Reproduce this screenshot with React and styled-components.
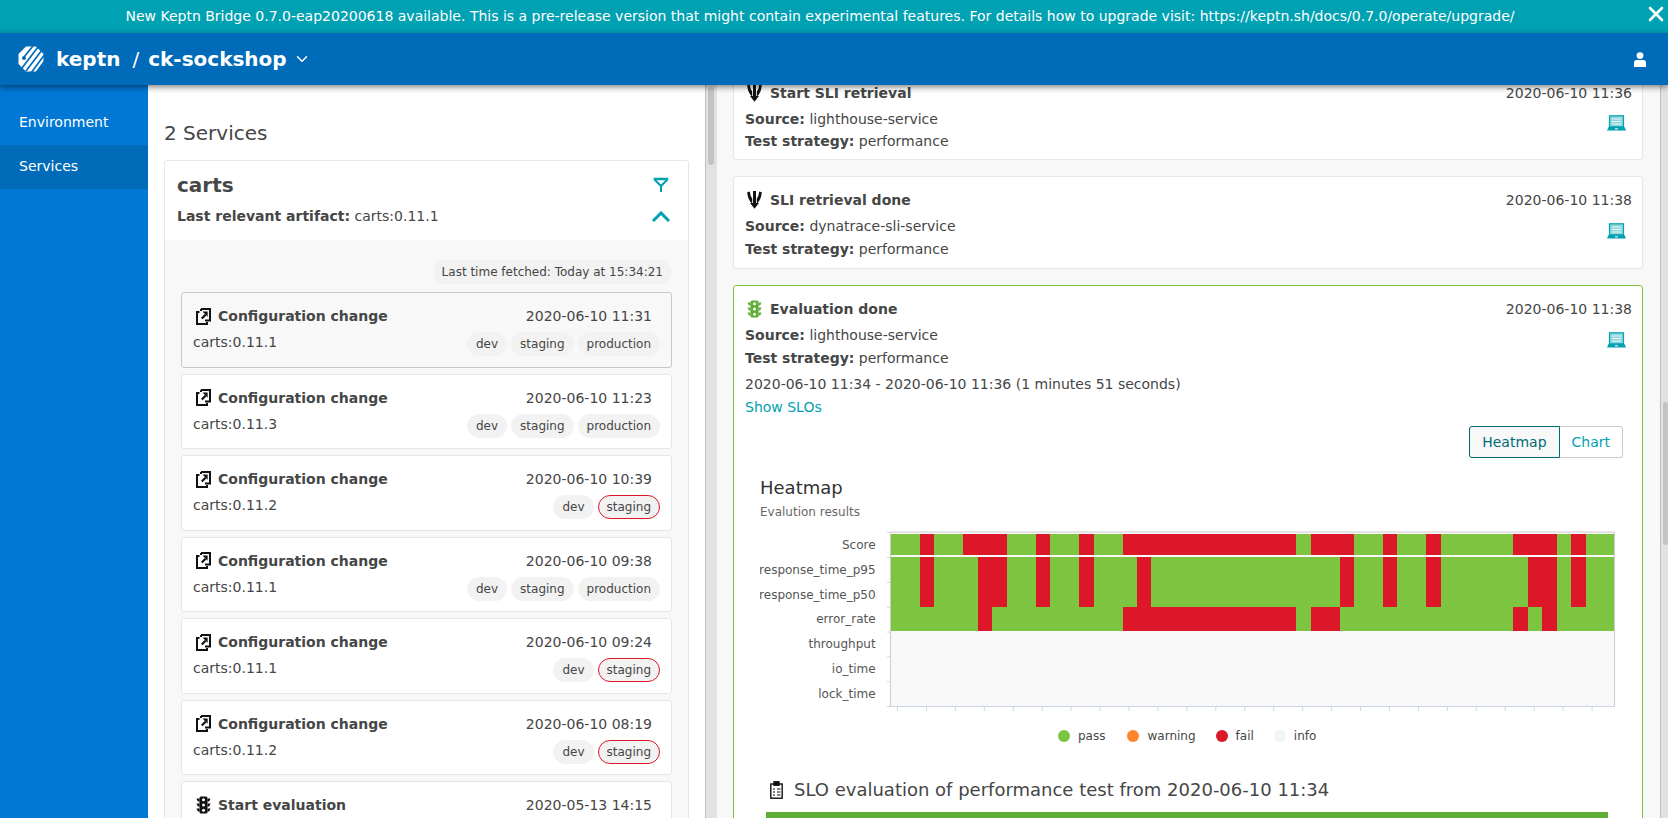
import React from 'react'
import styled, { createGlobalStyle } from 'styled-components'
import { ChevronDown, X } from 'lucide-react'

const GlobalStyle = createGlobalStyle`
  html, body { margin: 0; padding: 0; height: 100%; overflow: hidden; }
  body {
    font-family: "DejaVu Sans", Verdana, sans-serif;
    font-size: 14px;
    color: #454646;
  }
`

const Page = styled.div`
  width: 1668px;
  height: 818px;
  display: flex;
  flex-direction: column;
  overflow: hidden;
`
const Banner = styled.div`
  height: 33px;
  flex: none;
  box-sizing: border-box;
  background: #00a1b2;
  color: #fff;
  display: flex;
  align-items: center;
  justify-content: center;
  padding: 0 28px 2px 0;
  position: relative;
`
const CloseBtn = styled.span`
  position: absolute;
  right: 0;
  top: 2px;
  color: #fff;
  display: flex;
`
const Header = styled.header`
  height: 52px;
  flex: none;
  box-sizing: border-box;
  background: #006bb8;
  color: #fff;
  display: flex;
  align-items: center;
  padding: 0 22px 0 18px;
  font-size: 20px;
  font-weight: 700;
  box-shadow: 0 2px 6px rgba(0, 0, 0, 0.5);
  position: relative;
  z-index: 5;
`
const Slash = styled.span`
  font-weight: 400;
  margin: 0 9px 0 12px;
`
const Brand = styled.span`
  margin-left: 12px;
`
const UserBtn = styled.span`
  margin-left: auto;
  display: flex;
`
const Body = styled.div`
  flex: 1;
  display: flex;
  min-height: 0;
`
const Sidebar = styled.nav`
  width: 148px;
  flex: none;
  background: #0078d4;
  padding-top: 16px;
`
const NavItem = styled.div`
  height: 44px;
  box-sizing: border-box;
  display: flex;
  align-items: center;
  padding: 0 0 2px 19px;
  color: #fff;
  background: ${p => (p.$active ? '#006bb8' : 'transparent')};
`
const LeftPane = styled.section`
  width: 557px;
  flex: none;
  background: #fff;
  overflow: hidden;
  padding: 36px 16px 0;
  box-sizing: border-box;
`
const Scrollbar = styled.div`
  width: ${p => p.$w}px;
  flex: none;
  background: #e2e2e0;
  position: relative;
  border-left: 1px solid #bdbdbb;
  box-sizing: border-box;
`
const Thumb = styled.div`
  position: absolute;
  left: 2px;
  width: ${p => p.$w}px;
  top: ${p => p.$top}px;
  height: ${p => p.$h}px;
  background: #c2c4c2;
  border-radius: 3px;
`
const PaneTitle = styled.h2`
  margin: 0 0 15px;
  font-size: 20px;
  line-height: 24px;
  font-weight: 400;
`
const ServiceCard = styled.div`
  width: 525px;
  height: 660px;
  overflow: hidden;
  box-sizing: border-box;
  border: 1px solid #e6e6e6;
  border-radius: 3px;
  background: #f8f8f8;
`
const ServiceHead = styled.div`
  background: #fff;
  height: 79px;
  box-sizing: border-box;
  padding: 10px 12px 0;
  display: grid;
  grid-template-columns: 1fr auto;
  grid-auto-rows: 28px;
  row-gap: 3px;
  align-items: center;
`
const ServiceName = styled.div`
  font-size: 20px;
  font-weight: 700;
`
const IconCell = styled.span`
  display: flex;
  justify-content: center;
  width: 18px;
  margin-right: 6px;
  color: #00a1b2;
`
const Bold = styled.b`
  font-weight: 700;
`
const RowList = styled.div`
  padding: 0 16px;
`
const Fetched = styled.div`
  display: flex;
  justify-content: flex-end;
  margin: 20px 0 8px;
`
const FetchedPill = styled.span`
  height: 24px;
  padding: 0 9px;
  border-radius: 12px;
  background: #f2f2f2;
  font-size: 12px;
  display: flex;
  align-items: center;
`
const EventRow = styled.div`
  height: 75.56px;
  box-sizing: border-box;
  margin-bottom: 6px;
  padding: 11px 11px 0;
  background: ${p => (p.$selected ? '#f8f8f8' : '#fff')};
  border: 1px solid ${p => (p.$selected ? '#c8c8c8' : '#e6e6e6')};
  border-radius: 3px;
`
const RowTop = styled.div`
  display: flex;
  align-items: center;
  height: 24px;
  padding-right: 8px;
`
const RowTitle = styled.span`
  font-weight: 700;
  margin-left: 7px;
`
const RowIcon = styled.span`
  display: flex;
  width: 15px;
  margin-left: 3px;
  color: ${p => p.$color || '#111'};
`
const Stamp = styled.span`
  margin-left: auto;
`
const RowBottom = styled.div`
  display: flex;
  align-items: center;
  margin-top: 4px;
  height: 24px;
`
const Version = styled.span`
  margin-top: -4px;
`
const Tags = styled.div`
  margin-left: auto;
  display: flex;
  gap: 4px;
`
const Tag = styled.span`
  height: 24px;
  box-sizing: border-box;
  padding: 0 8px;
  border-radius: 12px;
  background: #f2f2f2;
  border: 1px solid ${p => (p.$failed ? '#dc172a' : '#f2f2f2')};
  font-size: 12px;
  display: flex;
  align-items: center;
`
const RightPane = styled.section`
  flex: 1;
  min-width: 0;
  background: #f8f8f8;
  overflow: hidden;
  padding: 0 17px 0 16px;
  box-sizing: border-box;
`
const EventList = styled.div`
  margin-top: -16.5px;
  display: flex;
  flex-direction: column;
  gap: 16px;
`
const EventCard = styled.article`
  background: #fff;
  border: 1px solid ${p => (p.$success ? '#7dc540' : '#e6e6e6')};
  border-radius: 3px;
  padding: 11px 10px 0 11px;
  height: ${p => p.$h}px;
  flex: none;
  box-sizing: border-box;
  position: relative;
`
const CardTop = styled.div`
  display: flex;
  align-items: center;
  height: 24px;
`
const CardIcon = styled.span`
  display: flex;
  width: 15px;
  margin-left: 2px;
  margin-right: 8px;
  color: ${p => p.$color || '#111'};
`
const Line = styled.div`
  line-height: 22.5px;
  height: 22.5px;
  margin-top: ${p => p.$gap || 0}px;
`
const Details = styled.div`
  margin-top: 3px;
`
const Laptop = styled.span`
  position: absolute;
  right: 16px;
  top: ${p => p.$top}px;
  display: flex;
  color: #00a1b2;
`
const LinkText = styled.div`
  color: #00a1b2;
  line-height: 22px;
`
const TabRow = styled.div`
  display: flex;
  justify-content: flex-end;
  margin: 8.5px 9px 0 0;
`
const TabBtn = styled.span`
  height: 32px;
  box-sizing: border-box;
  padding: 0 12px;
  display: flex;
  align-items: center;
  background: ${p => (p.$active ? '#f8f8f8' : '#fff')};
  color: ${p => (p.$active ? '#006b75' : '#00a1b2')};
  border: 1px solid ${p => (p.$active ? '#006b75' : '#ccc')};
  border-left-width: ${p => (p.$active ? 1 : 0)}px;
  border-radius: ${p => (p.$active ? '3px 0 0 3px' : '0 3px 3px 0')};
`
const ChartBox = styled.div`
  margin: 18px 0 0 15px;
`
const ChartTitle = styled.div`
  font-size: 18px;
  line-height: 24px;
  color: #333;
`
const ChartSub = styled.div`
  font-size: 12px;
  line-height: 16px;
  margin-top: 4px;
  color: #666;
`
const ChartSvg = styled.svg`
  display: block;
  margin-top: 9px;
`
const Legend = styled.div`
  display: flex;
  padding-left: 298px;
  margin-top: 11px;
  font-size: 12px;
  height: 20px;
`
const LegendItem = styled.span`
  display: flex;
  align-items: center;
  gap: 8px;
  margin-right: ${p => p.$gap}px;
  &::before {
    content: '';
    width: 12px;
    height: 12px;
    border-radius: 50%;
    background: ${p => p.$color};
  }
`
const SloTitle = styled.h3`
  margin: 32px 0 0 25px;
  font-size: 18px;
  line-height: 24px;
  font-weight: 400;
  display: flex;
  align-items: center;
  gap: 11px;
`
const SloBar = styled.div`
  margin: 10px 24px 0 21px;
  height: 30px;
  background: #5ead35;
`

const GREEN = '#7dc540'
const RED = '#dc172a'
const CELL = 14.47
const PLOT_X = 131

const redCols = {
  score: [2, 5, 6, 7, 10, 13, 16, 17, 18, 19, 20, 21, 22, 23, 24, 25, 26, 27, 29, 30, 31, 34, 37, 43, 44, 45, 47],
  time: [2, 6, 7, 10, 13, 17, 31, 34, 37, 44, 45, 47],
  err: [6, 16, 17, 18, 19, 20, 21, 22, 23, 24, 25, 26, 27, 29, 30, 43, 45],
}

const LogoMark = () => (
  <svg width="26" height="26" viewBox="0 0 26 26">
    <polygon points="8,0.5 18,0.5 25.5,8 25.5,18 18,25.5 8,25.5 0.5,18 0.5,8" fill="#fff" />
    <g stroke="#006bb8" strokeWidth="1.7">
      <path d="M6 11 L15 0" />
      <path d="M4 22 L20 1 M8 25 L24 4 M13 27 L27 8 M18 27 L28 13" />
    </g>
    <circle cx="6" cy="12" r="2" fill="#006bb8" />
  </svg>
)

const UserIcon = () => (
  <svg width="12" height="15" viewBox="0 0 12 15" fill="#fff">
    <circle cx="6" cy="3.6" r="3.4" />
    <path d="M0 15 V10.5 Q0 8 2.8 8 H9.2 Q12 8 12 10.5 V15 Z" />
  </svg>
)

const FilterIcon = () => (
  <svg width="16" height="16" viewBox="0 0 16 16" fill="none" stroke="currentColor" strokeWidth="2">
    <path d="M1.5 2.5 L8 9 L14.5 2.5" />
    <path d="M1 1 H15 V3 H1 Z" fill="currentColor" strokeWidth="0.5" />
    <path d="M7 8 H9 V15 H7 Z" fill="currentColor" stroke="none" />
  </svg>
)

const ChevronThick = () => (
  <svg width="18" height="11" viewBox="0 0 18 11" fill="none" stroke="currentColor" strokeWidth="3">
    <path d="M1 10 L9 2 L17 10" />
  </svg>
)

const ConfigIcon = () => (
  <svg width="15" height="17" viewBox="0 0 15 17" fill="none" stroke="currentColor" strokeWidth="2">
    <path d="M3.5 4 H1 V16 H11 V14" />
    <path d="M5 1 H14 V12.5 H9" />
    <path d="M5 1 V3" />
    <path d="M5.8 10.5 L9.5 6.8" strokeWidth="2.2" />
    <path d="M6.5 3.6 H11.6 V8.8 Z" fill="currentColor" stroke="none" />
  </svg>
)

const TrafficIcon = () => (
  <svg width="15" height="18" viewBox="0 0 15 18" fill="currentColor">
    <rect x="3.5" y="0.5" width="8" height="17" rx="1.5" />
    <path d="M0.5 2.5 H3.5 V6 Q1 5.5 0.5 2.5 M14.5 2.5 H11.5 V6 Q14 5.5 14.5 2.5 M0.5 7.5 H3.5 V11 Q1 10.5 0.5 7.5 M14.5 7.5 H11.5 V11 Q14 10.5 14.5 7.5 M0.5 12.5 H3.5 V16 Q1 15.5 0.5 12.5 M14.5 12.5 H11.5 V16 Q14 15.5 14.5 12.5" />
    <circle cx="7.5" cy="3.8" r="1.5" fill="#fff" />
    <circle cx="7.5" cy="9" r="1.5" fill="#fff" />
    <circle cx="7.5" cy="14.2" r="1.5" fill="#fff" />
  </svg>
)

const SliIcon = () => (
  <svg width="15" height="18" viewBox="0 0 15 18" fill="currentColor">
    <path d="M6 0 H9 V12 H6 Z" />
    <path d="M0.2 1.2 L2.8 0.5 Q3.2 5 5.2 7.5 V12.5 Q0.8 9 0.2 1.2 Z" />
    <path d="M14.8 1.2 L12.2 0.5 Q11.8 5 9.8 7.5 V12.5 Q14.2 9 14.8 1.2 Z" />
    <path d="M3 12 H12 L7.5 17.8 Z" />
  </svg>
)

const LaptopIcon = () => (
  <svg width="19" height="16" viewBox="0 0 19 16" fill="none">
    <rect x="2.5" y="0.8" width="14" height="11" fill="#8fd6dd" stroke="currentColor" strokeWidth="1.2" />
    <path d="M5 4 H14 M5 6.5 H14 M5 9 H14" stroke="#e4f6f8" strokeWidth="1" />
    <path d="M1.5 12 H17.5 L19 15.5 H0 Z" fill="currentColor" />
    <path d="M8 13.8 H11" stroke="#fff" strokeWidth="1" />
  </svg>
)

const ClipboardIcon = () => (
  <svg width="13" height="18" viewBox="0 0 13 18" fill="none" stroke="#111" strokeWidth="1.4">
    <rect x="0.8" y="3" width="11.4" height="14.2" />
    <rect x="4" y="0.8" width="5" height="3.4" fill="#111" />
    <path d="M3 8 H5 M7 8 H10.5 M3 11 H5 M7 11 H10.5 M3 14 H5 M7 14 H10.5" strokeWidth="1.2" />
  </svg>
)

const HeatRow = ({ y, h, red }) => (
  <g shapeRendering="crispEdges">
    {Array.from({ length: 50 }).map((_, i) => (
      <rect key={i} x={PLOT_X + i * CELL} y={y} width={CELL} height={h} fill={red.includes(i) ? RED : GREEN} />
    ))}
  </g>
)

const HeatmapChart = () => {
  const rows = ['Score', 'response_time_p95', 'response_time_p50', 'error_rate', 'throughput', 'io_time', 'lock_time']
  return (
    <ChartSvg width="860" height="186" viewBox="0 0 860 186">
      <rect x="130" y="3" width="724.5" height="174.5" fill="#f8f8f8" />
      <HeatRow y={5} h={21} red={redCols.score} />
      <HeatRow y={28.3} h={49.7} red={redCols.time} />
      <HeatRow y={78} h={24.3} red={redCols.err} />
      <path d="M130.5 3 H854.5 V177.5 M130.5 3 V177.5" fill="none" stroke="#ccc" strokeWidth="1" />
      <path d="M127 177.5 H855" stroke="#ccd6eb" strokeWidth="1" />
      {rows.map((r, i) => (
        <g key={r}>
          <path d={`M127 ${28.5 + i * 24.85} H130`} stroke="#ccd6eb" />
          <text x="115.6" y={20 + i * 24.8} textAnchor="end" fontSize="12" fill="#555">{r}</text>
        </g>
      ))}
      <path d="M127 3.5 H130" stroke="#ccd6eb" />
      {Array.from({ length: 25 }).map((_, i) => (
        <path key={i} d={`M${137.5 + i * 28.94} 177.5 V182`} stroke="#ccd6eb" />
      ))}
    </ChartSvg>
  )
}

const events = [
  { icon: 'config', title: 'Configuration change', time: '2020-06-10 11:31', version: 'carts:0.11.1', tags: ['dev', 'staging', 'production'], selected: true },
  { icon: 'config', title: 'Configuration change', time: '2020-06-10 11:23', version: 'carts:0.11.3', tags: ['dev', 'staging', 'production'] },
  { icon: 'config', title: 'Configuration change', time: '2020-06-10 10:39', version: 'carts:0.11.2', tags: ['dev', 'staging'], failed: 'staging' },
  { icon: 'config', title: 'Configuration change', time: '2020-06-10 09:38', version: 'carts:0.11.1', tags: ['dev', 'staging', 'production'] },
  { icon: 'config', title: 'Configuration change', time: '2020-06-10 09:24', version: 'carts:0.11.1', tags: ['dev', 'staging'], failed: 'staging' },
  { icon: 'config', title: 'Configuration change', time: '2020-06-10 08:19', version: 'carts:0.11.2', tags: ['dev', 'staging'], failed: 'staging' },
  { icon: 'traffic', title: 'Start evaluation', time: '2020-05-13 14:15', version: '', tags: [] },
]

const App = () => (
  <Page>
    <GlobalStyle />
    <Banner>
      New Keptn Bridge 0.7.0-eap20200618 available. This is a pre-release version that might contain experimental features. For details how to upgrade visit: https://keptn.sh/docs/0.7.0/operate/upgrade/
      <CloseBtn><X size={24} strokeWidth={2.6} /></CloseBtn>
    </Banner>
    <Header>
      <LogoMark />
      <Brand>keptn</Brand>
      <Slash>/</Slash>
      <span>ck-sockshop</span>
      <ChevronDown size={18} strokeWidth={2} style={{ marginLeft: '6px' }} />
      <UserBtn><UserIcon /></UserBtn>
    </Header>
    <Body>
      <Sidebar>
        <NavItem>Environment</NavItem>
        <NavItem $active>Services</NavItem>
      </Sidebar>
      <LeftPane>
        <PaneTitle>2 Services</PaneTitle>
        <ServiceCard>
          <ServiceHead>
            <ServiceName>carts</ServiceName>
            <IconCell><FilterIcon /></IconCell>
            <div><Bold>Last relevant artifact:</Bold> carts:0.11.1</div>
            <IconCell><ChevronThick /></IconCell>
          </ServiceHead>
          <RowList>
            <Fetched><FetchedPill>Last time fetched: Today at 15:34:21</FetchedPill></Fetched>
            {events.map((e, i) => (
              <EventRow key={i} $selected={e.selected}>
                <RowTop>
                  <RowIcon>{e.icon === 'config' ? <ConfigIcon /> : <TrafficIcon />}</RowIcon>
                  <RowTitle>{e.title}</RowTitle>
                  <Stamp>{e.time}</Stamp>
                </RowTop>
                <RowBottom>
                  <Version>{e.version}</Version>
                  <Tags>
                    {e.tags.map(t => <Tag key={t} $failed={e.failed === t}>{t}</Tag>)}
                  </Tags>
                </RowBottom>
              </EventRow>
            ))}
          </RowList>
        </ServiceCard>
      </LeftPane>
      <Scrollbar $w={12}><Thumb $w={6} $top={2} $h={78} /></Scrollbar>
      <RightPane>
        <EventList>
          <EventCard $h={91.5}>
            <CardTop>
              <CardIcon><SliIcon /></CardIcon>
              <Bold>Start SLI retrieval</Bold>
              <Stamp>2020-06-10 11:36</Stamp>
            </CardTop>
            <Details>
              <Line><Bold>Source:</Bold> lighthouse-service</Line>
              <Line><Bold>Test strategy:</Bold> performance</Line>
            </Details>
            <Laptop $top={45}><LaptopIcon /></Laptop>
          </EventCard>
          <EventCard $h={93}>
            <CardTop>
              <CardIcon><SliIcon /></CardIcon>
              <Bold>SLI retrieval done</Bold>
              <Stamp>2020-06-10 11:38</Stamp>
            </CardTop>
            <Details>
              <Line><Bold>Source:</Bold> dynatrace-sli-service</Line>
              <Line><Bold>Test strategy:</Bold> performance</Line>
            </Details>
            <Laptop $top={46}><LaptopIcon /></Laptop>
          </EventCard>
          <EventCard $success $h={620}>
            <CardTop>
              <CardIcon $color="#5ead35"><TrafficIcon /></CardIcon>
              <Bold>Evaluation done</Bold>
              <Stamp>2020-06-10 11:38</Stamp>
            </CardTop>
            <Details>
              <Line><Bold>Source:</Bold> lighthouse-service</Line>
              <Line><Bold>Test strategy:</Bold> performance</Line>
              <Line $gap={4}>2020-06-10 11:34 - 2020-06-10 11:36 (1 minutes 51 seconds)</Line>
            </Details>
            <LinkText>Show SLOs</LinkText>
            <Laptop $top={46}><LaptopIcon /></Laptop>
            <TabRow>
              <TabBtn $active>Heatmap</TabBtn>
              <TabBtn>Chart</TabBtn>
            </TabRow>
            <ChartBox>
              <ChartTitle>Heatmap</ChartTitle>
              <ChartSub>Evalution results</ChartSub>
              <HeatmapChart />
              <Legend>
                <LegendItem $color={GREEN} $gap={22}>pass</LegendItem>
                <LegendItem $color="#fe8528" $gap={20}>warning</LegendItem>
                <LegendItem $color={RED} $gap={20}>fail</LegendItem>
                <LegendItem $color="#f4f4f4" $gap={0}>info</LegendItem>
              </Legend>
            </ChartBox>
            <SloTitle><ClipboardIcon />SLO evaluation of performance test from 2020-06-10 11:34</SloTitle>
            <SloBar />
          </EventCard>
        </EventList>
      </RightPane>
      <Scrollbar $w={8}><Thumb $w={5} $top={317} $h={143} /></Scrollbar>
    </Body>
  </Page>
)

export default App
